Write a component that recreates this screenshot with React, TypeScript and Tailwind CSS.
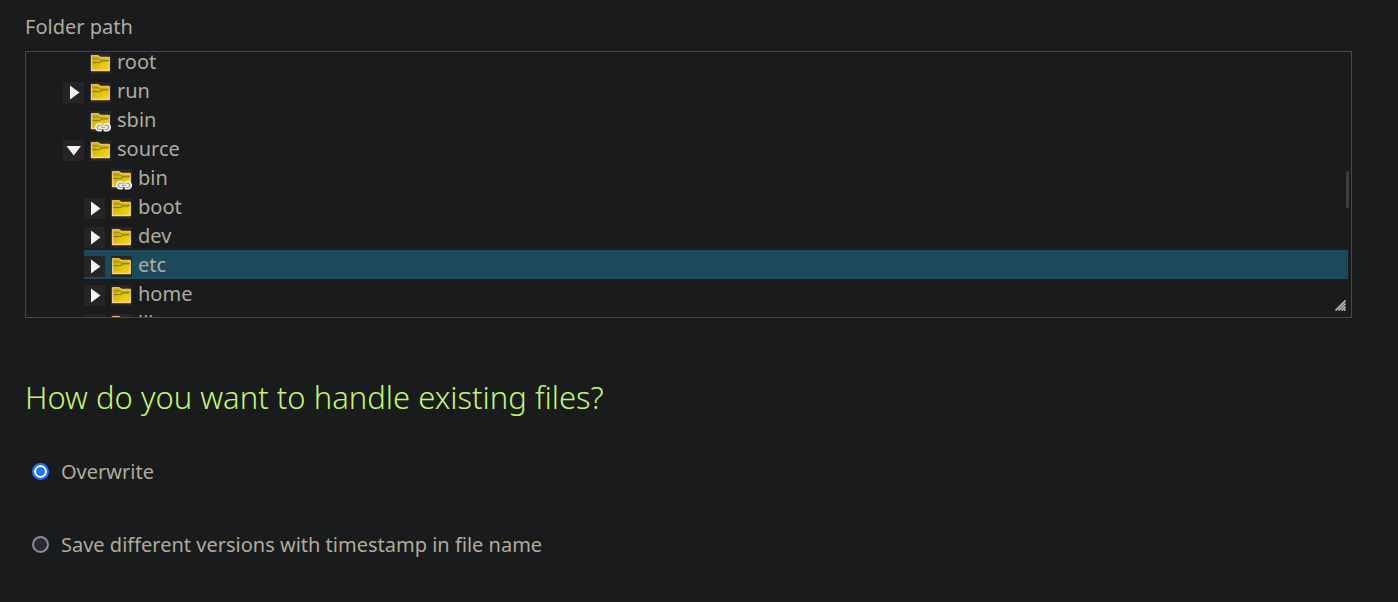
import { useState } from "react";

type Entry = { name: string; depth: 1 | 2; state: "open" | "closed" | "leaf"; linked?: boolean };

const entries: Entry[] = [
  { name: "root", depth: 1, state: "leaf" },
  { name: "run", depth: 1, state: "closed" },
  { name: "sbin", depth: 1, state: "leaf", linked: true },
  { name: "source", depth: 1, state: "open" },
  { name: "bin", depth: 2, state: "leaf", linked: true },
  { name: "boot", depth: 2, state: "closed" },
  { name: "dev", depth: 2, state: "closed" },
  { name: "etc", depth: 2, state: "closed" },
  { name: "home", depth: 2, state: "closed" },
  { name: "lib", depth: 2, state: "closed" },
];

function FolderIcon({ linked }: { linked?: boolean }) {
  return (
    <svg viewBox="0 0 21 21" className="block h-[21px] w-[21px] shrink-0" aria-hidden="true">
      <defs>
        <linearGradient id="folder-fill" x1="0" y1="0" x2="1" y2="1">
          <stop offset="0" stopColor="#c5a500" />
          <stop offset="0.6" stopColor="#e0c90c" />
          <stop offset="1" stopColor="#f4d820" />
        </linearGradient>
        <linearGradient id="folder-edge" x1="0" y1="0" x2="0" y2="1">
          <stop offset="0" stopColor="#e5bf55" />
          <stop offset="1" stopColor="#ffcf94" />
        </linearGradient>
      </defs>
      <rect width="21" height="21" fill="#292726" />
      <path d="M1.6 17.6V2.8H8L10.2 4.4H19.2V17.6Z" fill="url(#folder-fill)" stroke="url(#folder-edge)" strokeWidth="1.5" strokeLinejoin="round" />
      <path d="M2.6 5.8H8.2L10.8 7.2H18.4" fill="none" stroke="#a08510" strokeWidth="0.9" />
      <path d="M2.6 9.6H8.6C10.8 9.6 11.2 7.9 13.4 7.9H18.4" fill="none" stroke="#86700f" strokeWidth="1" />
      {linked && (
        <g fill="none" strokeLinecap="round">
          <path d="M10.5 13.6H9.2A2.7 2.7 0 0 0 9.2 19H10.5M15 13.6H16.8A2.7 2.7 0 0 1 16.8 19H15M10.5 16.3H15.5" stroke="#f1f1f1" strokeWidth="3.2" />
          <path d="M11 14.2H9.2A2.1 2.1 0 0 0 9.2 18.4H11M15 14.2H16.8A2.1 2.1 0 0 1 16.8 18.4H15M11.4 16.3H14.6" stroke="#858585" strokeWidth="0.9" />
        </g>
      )}
    </svg>
  );
}

function Toggle({ open, name }: { open: boolean; name: string }) {
  return (
    <button type="button" aria-label={name} aria-expanded={open} className="block h-[21px] w-[21px] shrink-0 bg-[#252525]">
      <svg viewBox="0 0 21 21" className="block h-[21px] w-[21px]" aria-hidden="true">
        <path d={open ? "M3.5 6H18L10.8 15.5Z" : "M7 3.5V17.5L16.5 10.5Z"} fill="#f2f2f2" />
      </svg>
    </button>
  );
}

export default function App() {
  const [selected, setSelected] = useState("etc");
  const [mode, setMode] = useState("overwrite");
  const options = [
    { id: "overwrite", label: "Overwrite" },
    { id: "versions", label: "Save different versions with timestamp in file name" },
  ];

  return (
    <main className="min-h-screen bg-[#1a1b1c] pt-3 pr-[46px] pb-10 pl-[25px] font-['Noto_Sans',sans-serif] text-[20px] leading-[29px] text-[#b1aa9f]">
      <h2 id="path-label">Folder path</h2>
      <div className="relative mt-[10px] h-[267px] overflow-hidden border border-[#454748]">
        <ul role="tree" aria-labelledby="path-label" className="-mt-[5px] pr-[3px] pl-[37px]">
          {entries.map((e) => (
            <li key={e.name} role="treeitem" aria-selected={selected === e.name} className={e.depth === 2 ? "pl-[21px]" : ""}>
              <div className={`flex h-[29px] gap-[6px] ${selected === e.name ? "bg-[#1d4a5a]" : ""}`}>
                <div className="w-[21px] shrink-0 pt-[6px]">
                  {e.state !== "leaf" && <Toggle open={e.state === "open"} name={e.name} />}
                </div>
                <button type="button" onClick={() => setSelected(e.name)} className="flex grow items-start gap-[6px] text-left">
                  <span className="pt-[6px]">
                    <FolderIcon linked={e.linked} />
                  </span>
                  <span>{e.name}</span>
                </button>
              </div>
            </li>
          ))}
        </ul>
        <div className="absolute top-[119px] right-[2px] h-[37px] w-[3px] rounded-full bg-[#3d3e40]" />
        <svg viewBox="0 0 11 11" className="absolute right-[5px] bottom-[6px] h-[11px] w-[11px]" aria-hidden="true">
          <path d="M0.5 10.5L10.5 0.5M3.5 10.5L10.5 3.5M6.5 10.5L10.5 6.5M9 10.5L10.5 9" stroke="#b9b9b9" strokeWidth="1.6" />
        </svg>
      </div>

      <fieldset className="mt-[58px]">
        <legend className="text-[31px] leading-[43px] font-[350] text-[#c3f76b]">How do you want to handle existing files?</legend>
        <div className="flex flex-col gap-11 pt-[38px]">
          {options.map((o) => (
            <label key={o.id} className="flex items-center gap-3 pl-[7px]">
              <input
                type="radio"
                name="existing-files"
                checked={mode === o.id}
                onChange={() => setMode(o.id)}
                className="h-[17px] w-[17px] shrink-0 appearance-none rounded-full border-2 border-[#8b8b98] bg-[#2b2a33] checked:border-[#2475ff] checked:bg-[#2475ff] checked:shadow-[inset_0_0_0_2px_white]"
              />
              <span>{o.label}</span>
            </label>
          ))}
        </div>
      </fieldset>
    </main>
  );
}
